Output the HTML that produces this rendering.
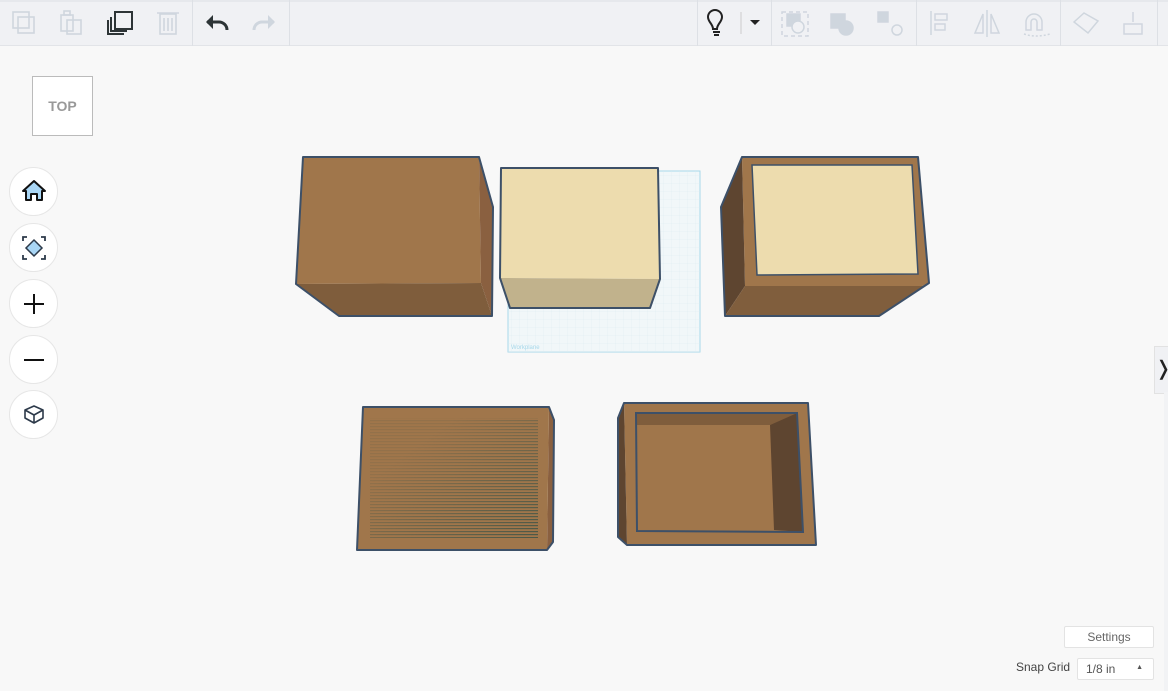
<!DOCTYPE html>
<html><head><meta charset="utf-8"><style>
html,body{margin:0;padding:0;width:1168px;height:691px;overflow:hidden;background:#f8f8f8;font-family:"Liberation Sans",sans-serif}
.tb{position:absolute;left:0;top:0;width:1168px;height:46px;background:#f0f1f4;border-bottom:1px solid #e2e4e8;border-top:2px solid #e6e8ec;box-sizing:border-box}
.sep{position:absolute;top:0;width:1px;height:46px;background:#dde0e5}
.circ{position:absolute;left:9px;width:49px;height:49px;border-radius:50%;background:#fff;border:1px solid #e6e6e6;box-sizing:border-box}
.btn{position:absolute;background:#fff;border:1px solid #e3e3e3;border-radius:2px;box-sizing:border-box;font-size:12px;color:#666}
</style></head><body>
<div class="tb"></div>
<div class="sep" style="left:192px"></div><div class="sep" style="left:289px"></div>
<div class="sep" style="left:697px"></div><div class="sep" style="left:771px"></div>
<div class="sep" style="left:916px"></div><div class="sep" style="left:1060px"></div><div class="sep" style="left:1157px"></div>
<svg style="position:absolute;left:0;top:0" width="1168" height="47">
<g fill="none" stroke="#cfd6de" stroke-width="1.6">
<rect x="13" y="12" width="16" height="16"/><rect x="18" y="17" width="16" height="16"/>
<rect x="61" y="15" width="12" height="16"/><rect x="67" y="20" width="14" height="14"/><rect x="64" y="11" width="6" height="4"/>
<rect x="160" y="14" width="16" height="20"/><line x1="157" y1="13" x2="179" y2="13"/><line x1="164" y1="18" x2="164" y2="31"/><line x1="168" y1="18" x2="168" y2="31"/><line x1="172" y1="18" x2="172" y2="31"/>
</g>
<g fill="none" stroke="#2d3436" stroke-width="2"><rect x="115" y="12" width="17" height="17"/><path d="M111 17v14h16M108 20v14h16"/></g>
<path d="M207 22h12a8 8 0 0 1 8 8" fill="none" stroke="#2d3436" stroke-width="3"/><path d="M206 22l7-7v14z" fill="#2d3436"/>
<path d="M274 22h-12a8 8 0 0 0-8 8" fill="none" stroke="#cfd6de" stroke-width="3"/><path d="M275 22l-7-7v14z" fill="#cfd6de"/>
<g fill="none" stroke="#222" stroke-width="2"><path d="M713 29c0-5-5-7-5-12a7 7 0 0 1 14 0c0 5-5 7-5 12z"/><line x1="713" y1="32" x2="720" y2="32"/><line x1="714" y1="35" x2="719" y2="35"/></g>
<line x1="741" y1="12" x2="741" y2="34" stroke="#ccc"/><path d="M750 20h10l-5 5z" fill="#222"/>
<g fill="#cfd6de" stroke="#cfd6de" stroke-width="1.5">
<rect x="782" y="12" width="26" height="24" fill="none" stroke-dasharray="4 3"/>
<rect x="787" y="14" width="13" height="12"/><circle cx="798" cy="27" r="6" fill="#f0f1f4"/>
<rect x="831" y="14" width="14" height="14"/><circle cx="846" cy="28" r="7"/>
<rect x="878" y="12" width="10" height="10"/><circle cx="897" cy="30" r="5" fill="none"/>
<rect x="935" y="14" width="12" height="6" fill="none"/><rect x="935" y="24" width="10" height="6" fill="none"/><line x1="931" y1="11" x2="931" y2="35"/>
<path d="M983 33l0-19-8 19zM991 33l0-19 8 19z" fill="none"/><line x1="987" y1="10" x2="987" y2="37"/>
<path d="M1026 30v-8a8 8 0 0 1 16 0v8h-5v-8a3 3 0 0 0-6 0v8z" fill="none"/><path d="M1024 34q12 4 26 0" fill="none" stroke-dasharray="2 2"/>
<path d="M1074 22l10-9 14 8-10 12z" fill="none"/>
<path d="M1124 34v-10h18v10zM1133 12v10" fill="none"/>
</g>
</svg>
<div style="position:absolute;left:32px;top:76px;width:61px;height:60px;background:#fff;border:1px solid #bbb;box-sizing:border-box;font-size:14px;font-weight:bold;color:#999;text-align:center;line-height:58px">TOP</div>
<div class="circ" style="top:167px"></div><div class="circ" style="top:223px"></div><div class="circ" style="top:279px"></div><div class="circ" style="top:335px"></div><div class="circ" style="top:390px"></div>
<svg style="position:absolute;left:0;top:0" width="70" height="440">
<path d="M34 181l-11 10h3v9h5v-6h6v6h5v-9h3z" fill="#a9d6f5" stroke="#111" stroke-width="2" stroke-linejoin="round"/>
<path d="M34 240l8 8-8 8-8-8z" fill="#a9d6f5" stroke="#2d3a4a" stroke-width="1.5"/>
<path d="M23 241v-4h4M41 237h4v4M45 255v4h-4M27 259h-4v-4" fill="none" stroke="#2d3a4a" stroke-width="1.8"/>
<path d="M24 304h20M34 294v20" stroke="#111" stroke-width="2"/>
<path d="M24 360h20" stroke="#111" stroke-width="2"/>
<path d="M34 406l9 4v8l-9 5-9-5v-8z M25 410l9 5 9-5M34 415v8" fill="#fff" stroke="#2d3a4a" stroke-width="1.6" stroke-linejoin="round"/>
</svg>
<svg style="position:absolute;left:0;top:0" width="1168" height="691">
<defs>
<pattern id="ln" width="3" height="3" patternUnits="userSpaceOnUse"><rect width="3" height="1.2" fill="#4a5848"/></pattern>
<pattern id="gr" width="8" height="8" patternUnits="userSpaceOnUse"><path d="M8 0V8H0" fill="none" stroke="#dbeaf0" stroke-width="0.5"/></pattern>
<linearGradient id="fade" x1="0" y1="0" x2="1" y2="1"><stop offset="0.25" stop-color="#fff" stop-opacity="0.15"/><stop offset="1" stop-color="#fff" stop-opacity="1"/></linearGradient>
<mask id="mk"><rect x="370" y="418" width="168" height="120" fill="url(#fade)"/></mask>
</defs>
<rect x="508" y="171" width="192" height="181" fill="#f1f7f9" stroke="#a8d8ea"/>
<rect x="508" y="171" width="192" height="181" fill="url(#gr)"/>
<text x="511" y="349" font-size="6" fill="#a8d8ea">Workplane</text>
<polygon points="303,157 479,157 481,283 296,284" fill="#a0764b"/>
<polygon points="479,157 493,207 492,316 481,283" fill="#8a6040"/>
<polygon points="296,284 481,283 492,316 339,316" fill="#7f5d3c"/>
<polygon points="303,157 479,157 493,207 492,316 339,316 296,284" fill="none" stroke="#3d5068" stroke-width="2" stroke-linejoin="round"/>
<polygon points="501,168 658,168 660,279 500,278" fill="#eddcae"/>
<polygon points="500,278 660,279 650,308 510,308" fill="#c1b28c"/>
<polygon points="501,168 658,168 660,279 650,308 510,308 500,278" fill="none" stroke="#3d5068" stroke-width="2" stroke-linejoin="round"/>
<polygon points="742,157 918,157 929,283 922,286 745,286" fill="#a0764b"/>
<polygon points="742,157 745,286 725,316 721,207" fill="#5e4530"/>
<polygon points="745,286 922,286 929,283 879,316 725,316" fill="#805e3d"/>
<polygon points="752,165 912,165 918,274 757,275" fill="#eddcae" stroke="#3d5068" stroke-width="1.5"/>
<polygon points="742,157 918,157 929,283 879,316 725,316 721,207" fill="none" stroke="#3d5068" stroke-width="2" stroke-linejoin="round"/>
<polygon points="549,407 554,420 553,542 547,550" fill="#8a6040"/>
<polygon points="363,407 549,407 547,550 357,550" fill="#a0764b"/>
<rect x="370" y="418" width="168" height="120" fill="url(#ln)" mask="url(#mk)"/>
<polygon points="363,407 549,407 554,420 553,542 547,550 357,550" fill="none" stroke="#3d5068" stroke-width="2" stroke-linejoin="round"/>
<polygon points="624,403 808,403 816,545 627,545" fill="#a0764b"/>
<polygon points="624,403 627,545 618,537 618,418" fill="#5e4530"/>
<polygon points="636,413 797,413 770,425 637,425" fill="#7f5d3c"/>
<polygon points="770,425 797,413 803,532 774,530" fill="#5e4530"/>
<polygon points="636,413 797,413 803,532 637,531" fill="none" stroke="#3d5068" stroke-width="2"/>
<polygon points="624,403 808,403 816,545 627,545 618,537 618,418" fill="none" stroke="#3d5068" stroke-width="2" stroke-linejoin="round"/>
</svg>
<div style="position:absolute;left:1154px;top:346px;width:14px;height:46px;background:#f0f1f4;border:1px solid #e2e2e2;font-size:20px;line-height:44px;color:#222;text-align:center">❭</div>
<div style="position:absolute;left:1164px;top:392px;width:4px;height:299px;background:#f2f3f5"></div>
<div class="btn" style="left:1064px;top:626px;width:90px;height:22px;text-align:center;line-height:20px">Settings</div>
<div style="position:absolute;left:1016px;top:660px;font-size:12px;color:#444">Snap Grid</div>
<div class="btn" style="left:1077px;top:658px;width:77px;height:22px;line-height:20px;padding-left:8px;color:#555">1/8 in<span style="position:absolute;right:10px;top:-1px;font-size:7px">▲</span></div>
</body></html>
